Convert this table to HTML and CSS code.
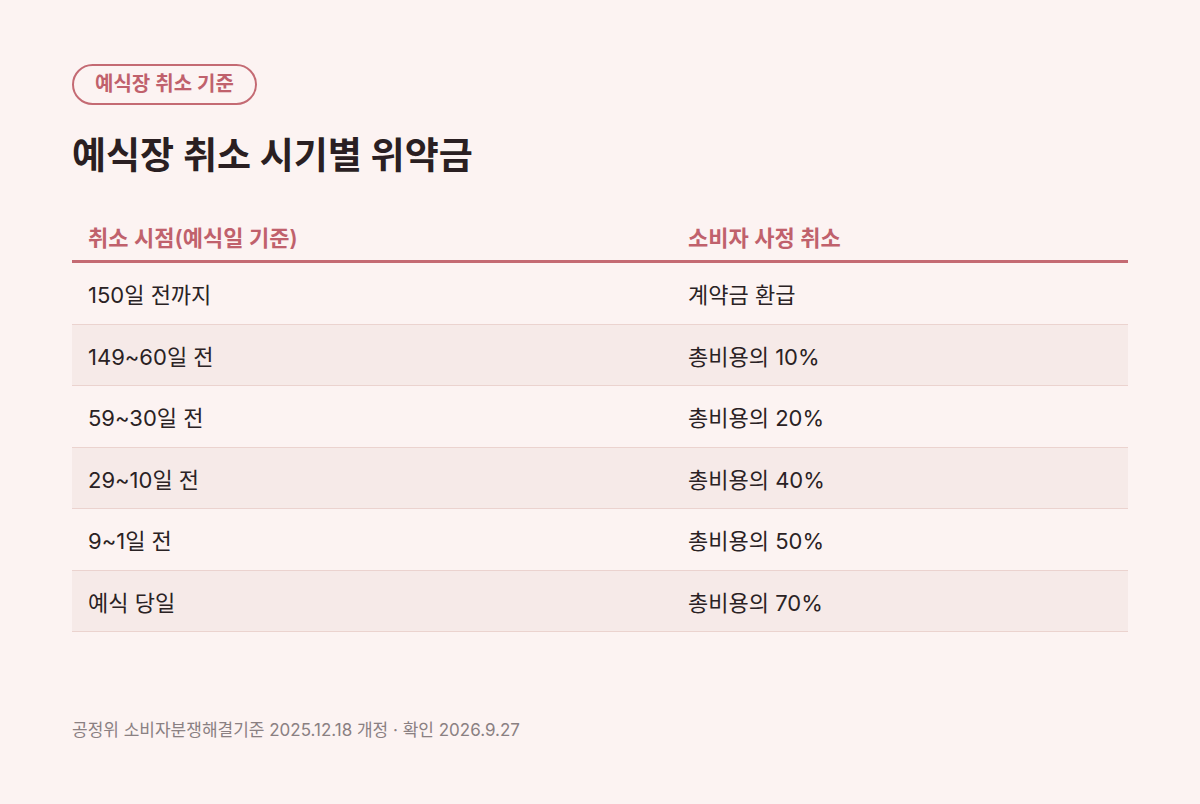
FILE: index.html
```html
<!DOCTYPE html>
<html lang="ko">
<head>
<meta charset="utf-8">
<link rel="stylesheet" href="styles.css">
</head>
<body>
<main class="page">
  <span class="badge">예식장 취소 기준</span>
  <h1 class="title">예식장 취소 시기별 위약금</h1>
  <table class="fees">
    <thead>
      <tr><th class="c1">취소 시점(예식일 기준)</th><th>소비자 사정 취소</th></tr>
    </thead>
    <tbody>
      <tr><td class="c1">150일 전까지</td><td>계약금 환급</td></tr>
      <tr><td class="c1">149~60일 전</td><td>총비용의 10%</td></tr>
      <tr><td class="c1">59~30일 전</td><td>총비용의 20%</td></tr>
      <tr><td class="c1">29~10일 전</td><td>총비용의 40%</td></tr>
      <tr><td class="c1">9~1일 전</td><td>총비용의 50%</td></tr>
      <tr><td class="c1">예식 당일</td><td>총비용의 70%</td></tr>
    </tbody>
  </table>
  <p class="note">공정위 소비자분쟁해결기준 2025.12.18 개정 · 확인 2026.9.27</p>
</main>
</body>
</html>
```
FILE: styles.css
```css
html, body {
  margin: 0;
  padding: 0;
  background: #fcf3f2;
}
body {
  font-family: Inter, "Noto Sans CJK KR", sans-serif;
  color: #2a2224;
}
.page {
  padding: 64px 72px 0 72px;
  display: flex;
  flex-direction: column;
  align-items: flex-start;
}
.badge {
  display: inline-block;
  box-sizing: border-box;
  height: 41px;
  line-height: 37px;
  padding: 0 21px;
  border: 2px solid #c46a73;
  border-radius: 21px;
  color: #c0616c;
  font-size: 20px;
  font-weight: 600;
}
.title {
  margin: 27px 0 0 0;
  font-size: 37px;
  line-height: 48px;
  font-weight: 700;
  color: #2a1f22;
}
.fees {
  margin-top: 31px;
  width: 1056px;
  border-collapse: collapse;
  font-size: 22px;
}
.fees th {
  text-align: left;
  font-weight: 600;
  color: #c0616c;
  padding: 0 16px;
  height: 49px;
  vertical-align: middle;
  border-bottom: 3px solid #c46a73;
}
.fees .c1 {
  width: 568px;
}
.fees td {
  padding: 0 16px;
  height: 60.5px;
  border-bottom: 1px solid #ebd3cf;
  color: #2a2224;
}
.fees tbody tr:nth-child(even) td {
  background: #f6eae8;
}
.note {
  margin: 84px 0 0 0;
  font-size: 17px;
  color: #8a8082;
}
```
